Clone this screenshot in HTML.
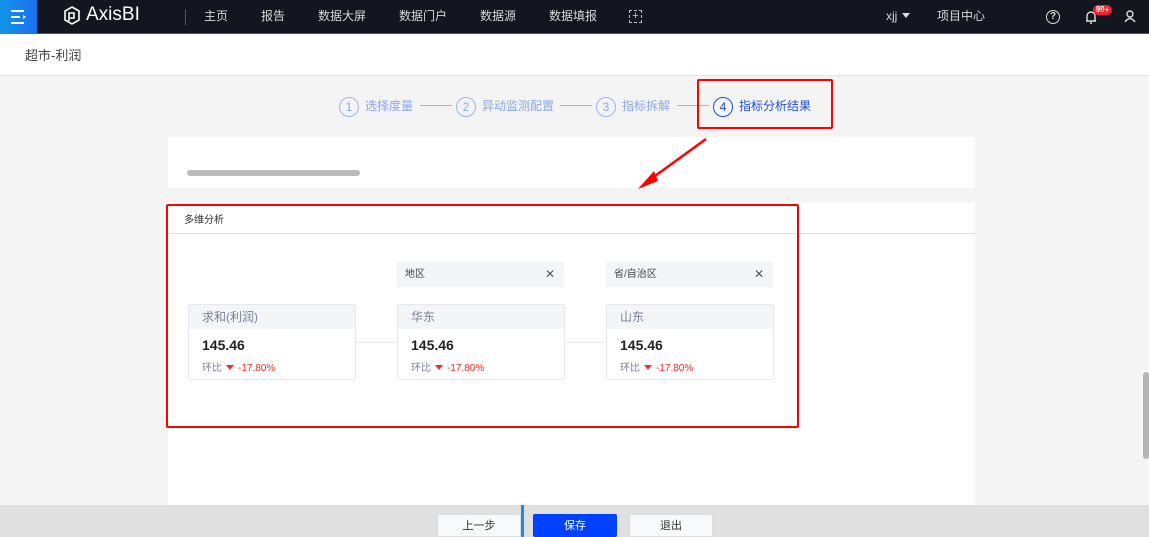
<!DOCTYPE html>
<html><head><meta charset="utf-8"><style>
*{margin:0;padding:0;box-sizing:border-box}
body{width:1149px;height:537px;overflow:hidden;background:#f4f4f4;font-family:"Liberation Sans","Noto Sans CJK SC",sans-serif;position:relative;font-size:12px;color:#333}
.abs{position:absolute}
.hdr{left:0;top:0;width:1149px;height:34px;background:#13161e;border-bottom:1px solid #555}
.nav{top:0;height:34px;line-height:33px;color:#d8d8d8;font-size:12px}
.title{left:0;top:34px;width:1149px;height:42px;background:#fff;border-bottom:1px solid #e4e4e4}
.step{top:95px;height:22px;line-height:22px;color:#8aa6f0;font-size:12px}
.circ{display:inline-block;width:20px;height:20px;border:1px solid #9bb4f3;border-radius:50%;text-align:center;line-height:18px;margin-right:6px;vertical-align:middle}
.line{top:105px;height:1px;background:#9bb4f3}
.card{background:#fff;border:1px solid #e6e8ee;border-radius:2px}
.ch{height:24px;background:#f4f5f9;color:#7a8199;font-size:12px;line-height:24px;padding-left:13px}
.num{font-weight:bold;font-size:14px;color:#222;padding:8px 0 0 13px}
.rt{font-size:10px;color:#7a8199;padding:6px 0 0 13px}
.rt span.r{color:#f02c2c}
.tri{display:inline-block;width:0;height:0;border-left:4px solid transparent;border-right:4px solid transparent;border-top:5px solid #f02c2c;margin:0 4px 0 4px;vertical-align:1px}
.tag{background:#f4f5f9;height:25px;line-height:25px;font-size:10px;color:#444;padding-left:8px}
.tag b{position:absolute;right:9px;top:0;font-weight:normal;font-size:12px;color:#555}
.btn{top:514px;width:84px;height:23px;background:#f8f9fb;border:1px solid #ddd;border-radius:2px;text-align:center;line-height:22px;font-size:11px;color:#333}
</style></head><body>
<div class="abs hdr"></div>
<div class="abs" style="left:0;top:0;width:37px;height:34px;background:linear-gradient(90deg,#1296e6,#1a6ff0)"></div>
<div class="abs" style="left:11px;top:10px;width:13px;height:2px;background:#fff"></div>
<div class="abs" style="left:11px;top:16px;width:9px;height:2px;background:#fff"></div>
<div class="abs" style="left:11px;top:22px;width:13px;height:2px;background:#fff"></div>
<div class="abs" style="left:23px;top:15px;width:0;height:0;border-top:2px solid transparent;border-bottom:2px solid transparent;border-left:3px solid #fff"></div>
<svg class="abs" style="left:63px;top:6px" width="18" height="20" viewBox="0 0 18 20"><path d="M9 1 L16 5 L16 14 L9 18 L2 14 L2 5 Z" fill="none" stroke="#fff" stroke-width="1.6"/><path d="M6 15 L6 7 L11 7 L11 12 L7 12" fill="none" stroke="#fff" stroke-width="1.6"/></svg>
<div class="abs nav" style="left:86px;color:#fff;font-size:19px;line-height:29px">AxisBI</div>
<div class="abs" style="left:185px;top:9px;width:1px;height:16px;background:#555"></div>
<div class="abs nav" style="left:204px">主页</div>
<div class="abs nav" style="left:261px">报告</div>
<div class="abs nav" style="left:318px">数据大屏</div>
<div class="abs nav" style="left:399px">数据门户</div>
<div class="abs nav" style="left:480px">数据源</div>
<div class="abs nav" style="left:549px">数据填报</div>
<div class="abs" style="left:629px;top:10px;width:13px;height:13px;border:1px dashed #bbb;color:#ccc;font-size:11px;line-height:11px;text-align:center">+</div>
<div class="abs nav" style="left:886px">xjj</div>
<div class="abs" style="left:902px;top:13px;border-left:4px solid transparent;border-right:4px solid transparent;border-top:5px solid #ddd"></div>
<div class="abs nav" style="left:937px">项目中心</div>
<div class="abs" style="left:1046px;top:10px;width:14px;height:14px;border:1.5px solid #ddd;border-radius:50%;color:#ddd;font-size:10px;line-height:11px;text-align:center;font-weight:bold">?</div>
<svg class="abs" style="left:1084px;top:9px" width="14" height="16" viewBox="0 0 14 16"><path d="M3 12 V7 a4 4 0 0 1 8 0 V12 H2 H12 M6 14 H8" fill="none" stroke="#ddd" stroke-width="1.4"/></svg>
<div class="abs" style="left:1093px;top:5px;width:19px;height:10px;background:#f5222d;border-radius:5px;color:#fff;font-size:8px;line-height:10px;text-align:center;font-weight:bold">99+</div>
<svg class="abs" style="left:1124px;top:10px" width="12" height="13" viewBox="0 0 12 13"><circle cx="6" cy="4" r="3" fill="none" stroke="#ddd" stroke-width="1.4"/><path d="M1 12 Q6 5 11 12" fill="none" stroke="#ddd" stroke-width="1.4"/></svg>
<div class="abs title"></div>
<div class="abs" style="left:25px;top:45px;font-size:13px;color:#444">超市-利润</div>

<div class="abs step" style="left:339px"><span class="circ">1</span>选择度量</div>
<div class="abs line" style="left:420px;width:32px"></div>
<div class="abs step" style="left:456px"><span class="circ">2</span>异动监测配置</div>
<div class="abs line" style="left:560px;width:32px"></div>
<div class="abs step" style="left:596px"><span class="circ">3</span>指标拆解</div>
<div class="abs line" style="left:677px;width:32px"></div>
<div class="abs step" style="left:713px;color:#1f4fe0"><span class="circ" style="border-color:#1f4fe0;border-width:1.5px">4</span>指标分析结果</div>
<div class="abs" style="left:697px;top:79px;width:136px;height:50px;border:2px solid #f00;border-radius:2px"></div>

<div class="abs" style="left:168px;top:137px;width:807px;height:51px;background:#fff;border-radius:2px"></div>
<div class="abs" style="left:187px;top:170px;width:173px;height:6px;background:#bbb;border-radius:3px"></div>
<svg class="abs" style="left:630px;top:135px" width="85" height="60"><path d="M76 4 L14 49" stroke="#f00" stroke-width="2.5"/><path d="M8 54 L24 36 L28 46 Z" fill="#f00"/></svg>

<div class="abs" style="left:168px;top:202px;width:807px;height:303px;background:#fff"></div>
<div class="abs" style="left:168px;top:233px;width:807px;height:1px;background:#e2e2e2"></div>
<div class="abs" style="left:184px;top:211px;font-size:10px;color:#333">多维分析</div>

<div class="abs tag" style="left:397px;top:262px;width:167px">地区<b>✕</b></div>
<div class="abs tag" style="left:606px;top:262px;width:167px">省/自治区<b>✕</b></div>
<div class="abs" style="left:355px;top:342px;width:42px;height:1px;background:#e6e8ee"></div>
<div class="abs" style="left:564px;top:342px;width:42px;height:1px;background:#e6e8ee"></div>
<div class="abs card" style="left:188px;top:304px;width:168px;height:76px"><div class="ch">求和(利润)</div><div class="num">145.46</div><div class="rt">环比<span class="tri"></span><span class="r">-17.80%</span></div></div>
<div class="abs card" style="left:397px;top:304px;width:168px;height:76px"><div class="ch">华东</div><div class="num">145.46</div><div class="rt">环比<span class="tri"></span><span class="r">-17.80%</span></div></div>
<div class="abs card" style="left:606px;top:304px;width:168px;height:76px"><div class="ch">山东</div><div class="num">145.46</div><div class="rt">环比<span class="tri"></span><span class="r">-17.80%</span></div></div>
<div class="abs" style="left:166px;top:204px;width:633px;height:224px;border:2px solid #f00;border-radius:2px"></div>

<div class="abs" style="left:1143px;top:372px;width:6px;height:87px;background:#b5b5b5;border-radius:3px"></div>
<div class="abs" style="left:0;top:505px;width:1149px;height:32px;background:#e0e0e0"></div>
<div class="abs" style="left:521px;top:505px;width:3px;height:32px;background:#1a8cf0"></div>
<div class="abs btn" style="left:437px">上一步</div>
<div class="abs btn" style="left:533px;background:#0040ff;border-color:#0040ff;color:#fff">保存</div>
<div class="abs btn" style="left:629px">退出</div>
</body></html>
